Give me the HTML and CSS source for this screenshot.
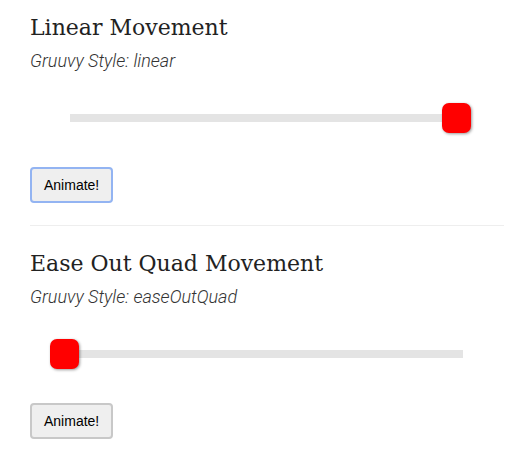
FILE: index.html
```html
<!DOCTYPE html>
<html lang="en">
    <head>
        <meta charset="UTF-8" />
        <title>Gruuvy Movement</title>
        <link rel="stylesheet" href="styles.css">
    </head>
    <body>
        <div class="page">
            <!-- Linear demo -->
            <div class="demo">
                <h2>Linear Movement</h2>
                <p class="demo-style">Gruuvy Style: linear</p>
                <div class="slider">
                    <div class="slider-track"></div>
                    <div class="slider-knob" style="left: 412px;"></div>
                </div>
                <button type="button" class="animate-btn focused">Animate!</button>
            </div>

            <!-- Ease out quad demo -->
            <div class="demo">
                <h2>Ease Out Quad Movement</h2>
                <p class="demo-style">Gruuvy Style: easeOutQuad</p>
                <div class="slider">
                    <div class="slider-track"></div>
                    <div class="slider-knob" style="left: 20px;"></div>
                </div>
                <button type="button" class="animate-btn">Animate!</button>
            </div>
        </div>
    </body>
</html>
```

FILE: styles.css
```css
/* --- Basic Reset --- */
* {
  margin: 0;
  padding: 0;
  box-sizing: border-box;
}

body {
  background-color: #fff;
  font-family: "Roboto", sans-serif;
}

.page {
  width: 474px;
  margin-left: 30px;
}

/* --- Demo block --- */
.demo {
  padding: 23px 0 22px;
  border-bottom: 1px solid #eeeeee;
}

.demo:first-child {
  padding-top: 13px;
}

.demo h2 {
  font-family: "DejaVu Serif", serif;
  font-weight: normal;
  font-size: 22px;
  line-height: 30px;
  color: #222;
}

.demo-style {
  margin-top: 7px;
  font-size: 18px;
  line-height: 22px;
  font-style: italic;
  font-weight: 300;
  color: #333;
}

/* --- Slider --- */
.slider {
  position: relative;
  height: 30px;
  margin: 31px 0 34px;
  display: flex;
  align-items: center;
}

.slider-track {
  margin-left: 40px;
  width: 393px;
  height: 8px;
  background-color: #e4e4e4;
}

.slider-knob {
  position: absolute;
  top: 0;
  width: 29px;
  height: 30px;
  background-color: #ff0000;
  border-radius: 7px;
  box-shadow: 1px 1px 3px rgba(0, 0, 0, 0.4);
}

/* --- Button --- */
.animate-btn {
  display: block;
  font-family: "Liberation Sans", Arial, sans-serif;
  font-size: 14px;
  line-height: 16px;
  color: #000;
  background-color: #efefef;
  border: 2px solid #c8c8c8;
  border-radius: 4px;
  padding: 8px 12px;
  cursor: pointer;
}

.animate-btn.focused {
  border-color: #93b4f2;
}
```
